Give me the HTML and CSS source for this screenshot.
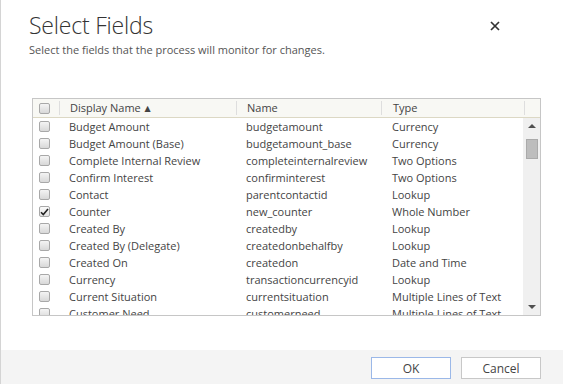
FILE: index.html
```html
<!DOCTYPE html>
<html lang="en">
<head>
  <meta charset="UTF-8">
  <title>Select Fields</title>
  <link rel="stylesheet" href="styles.css">
</head>
<body>
  <div class="dialog">
    <div class="dialog-head">
      <h1>Select Fields</h1>
      <button class="close" title="Close">
        <svg width="10" height="10" viewBox="0 0 10 10"><path d="M1 1L9 9M9 1L1 9" stroke="#333" stroke-width="1.7"/></svg>
      </button>
    </div>
    <p class="subtitle">Select the fields that the process will monitor for changes.</p>

    <div class="fields">
      <div class="row head">
        <div class="cell check"><span class="box"></span></div>
        <div class="cell sep">Display Name <span class="sort">&#9650;</span></div>
        <div class="cell sep">Name</div>
        <div class="cell sep">Type</div>
        <div class="cell sep end"></div>
      </div>
      <div class="body">
        <div class="rows">
          <div class="row"><div class="cell check"><span class="box"></span></div><div class="cell">Budget Amount</div><div class="cell">budgetamount</div><div class="cell">Currency</div></div>
          <div class="row"><div class="cell check"><span class="box"></span></div><div class="cell">Budget Amount (Base)</div><div class="cell">budgetamount_base</div><div class="cell">Currency</div></div>
          <div class="row"><div class="cell check"><span class="box"></span></div><div class="cell">Complete Internal Review</div><div class="cell">completeinternalreview</div><div class="cell">Two Options</div></div>
          <div class="row"><div class="cell check"><span class="box"></span></div><div class="cell">Confirm Interest</div><div class="cell">confirminterest</div><div class="cell">Two Options</div></div>
          <div class="row"><div class="cell check"><span class="box"></span></div><div class="cell">Contact</div><div class="cell">parentcontactid</div><div class="cell">Lookup</div></div>
          <div class="row"><div class="cell check"><span class="box checked"><svg width="9" height="8" viewBox="0 0 9 8"><path d="M1 4.2L3.3 6.5L8 1" stroke="#222" stroke-width="1.6" fill="none"/></svg></span></div><div class="cell">Counter</div><div class="cell">new_counter</div><div class="cell">Whole Number</div></div>
          <div class="row"><div class="cell check"><span class="box"></span></div><div class="cell">Created By</div><div class="cell">createdby</div><div class="cell">Lookup</div></div>
          <div class="row"><div class="cell check"><span class="box"></span></div><div class="cell">Created By (Delegate)</div><div class="cell">createdonbehalfby</div><div class="cell">Lookup</div></div>
          <div class="row"><div class="cell check"><span class="box"></span></div><div class="cell">Created On</div><div class="cell">createdon</div><div class="cell">Date and Time</div></div>
          <div class="row"><div class="cell check"><span class="box"></span></div><div class="cell">Currency</div><div class="cell">transactioncurrencyid</div><div class="cell">Lookup</div></div>
          <div class="row"><div class="cell check"><span class="box"></span></div><div class="cell">Current Situation</div><div class="cell">currentsituation</div><div class="cell">Multiple Lines of Text</div></div>
          <div class="row"><div class="cell check"><span class="box"></span></div><div class="cell">Customer Need</div><div class="cell">customerneed</div><div class="cell">Multiple Lines of Text</div></div>
        </div>
        <div class="scrollbar">
          <span class="arrow up"></span>
          <div class="track"><span class="thumb"></span></div>
          <span class="arrow down"></span>
        </div>
      </div>
    </div>

    <div class="footer">
      <button class="btn primary">OK</button>
      <button class="btn">Cancel</button>
    </div>
  </div>
</body>
</html>
```

FILE: styles.css
```css
html, body {
  margin: 0;
  height: 100%;
}
body {
  font-family: "Open Sans", "DejaVu Sans", sans-serif;
  color: #444;
  background: #fff;
}
.dialog {
  height: 384px;
  box-sizing: border-box;
  border-left: 1px solid #d4d4d4;
  display: flex;
  flex-direction: column;
}
.dialog-head {
  display: flex;
  justify-content: space-between;
  align-items: flex-start;
  padding: 10px 63px 0 28px;
}
h1 {
  margin: 0;
  font-size: 23px;
  font-weight: 300;
  color: #333;
  line-height: 30px;
  letter-spacing: -0.2px;
}
.close {
  border: none;
  background: none;
  padding: 0;
  margin-top: 9px;
  cursor: pointer;
}
.subtitle {
  margin: 2px 0 0 28px;
  font-size: 11px;
  color: #555;
}
.fields {
  margin: 41px 0 0 31px;
  width: 509px;
  height: 218px;
  border: 1px solid #c6c6c6;
  box-sizing: border-box;
  display: flex;
  flex-direction: column;
  overflow: hidden;
}
.row {
  display: grid;
  grid-template-columns: 26px 177px 145px 143px;
  height: 17px;
  align-items: center;
  font-size: 11px;
}
.row.head {
  grid-template-columns: 26px 177px 145px 143px 16px;
  height: 18px;
  background: #f8f8f4;
  border-bottom: 1px solid #dcd8c4;
  flex: none;
}
.cell {
  padding-left: 10px;
  white-space: nowrap;
  overflow: hidden;
}
.cell.check {
  padding-left: 6px;
  display: flex;
  align-items: center;
}
.head .sep {
  border-left: 1px solid #dedede;
  height: 14px;
  line-height: 14px;
  overflow: visible;
}
.head .cell:nth-child(4) {
  padding-left: 11px;
}
.sort {
  font-size: 8px;
  vertical-align: 1px;
  margin-left: 1px;
}
.box {
  width: 11px;
  height: 11px;
  box-sizing: border-box;
  border: 1px solid #a8a8a8;
  border-radius: 2px;
  background: linear-gradient(#f4f4f4, #d8d8d8);
  display: flex;
  align-items: center;
  justify-content: center;
}
.box.checked {
  background: linear-gradient(#fafafa, #e2e2e2);
}
.body {
  flex: 1;
  display: flex;
  min-height: 0;
}
.rows {
  flex: 1;
  overflow: hidden;
}
.rows .row .cell:nth-child(4) {
  padding-left: 11px;
}
.scrollbar {
  width: 17px;
  background: #f0f0f0;
  display: flex;
  flex-direction: column;
  align-items: center;
}
.arrow {
  width: 0;
  height: 0;
  border-left: 4px solid transparent;
  border-right: 4px solid transparent;
  margin: 6px 0;
}
.arrow.up {
  border-bottom: 4px solid #505050;
}
.arrow.down {
  border-top: 4px solid #505050;
}
.track {
  flex: 1;
  width: 100%;
}
.thumb {
  display: block;
  margin: 5px auto 0;
  width: 12px;
  height: 20px;
  background: #bdbdbd;
  border: 1px solid #aaa;
  box-sizing: border-box;
}
.footer {
  margin-top: auto;
  height: 34px;
  background: #f4f4f4;
  display: flex;
  justify-content: flex-end;
  align-items: flex-start;
  gap: 10px;
  padding: 7px 22px 0 0;
  box-sizing: border-box;
}
.btn {
  width: 80px;
  height: 22px;
  font-family: inherit;
  font-size: 12px;
  color: #444;
  background: #fff;
  border: 1px solid #c8c8c8;
  cursor: pointer;
}
.btn.primary {
  border-color: #9bb8e8;
}
```
